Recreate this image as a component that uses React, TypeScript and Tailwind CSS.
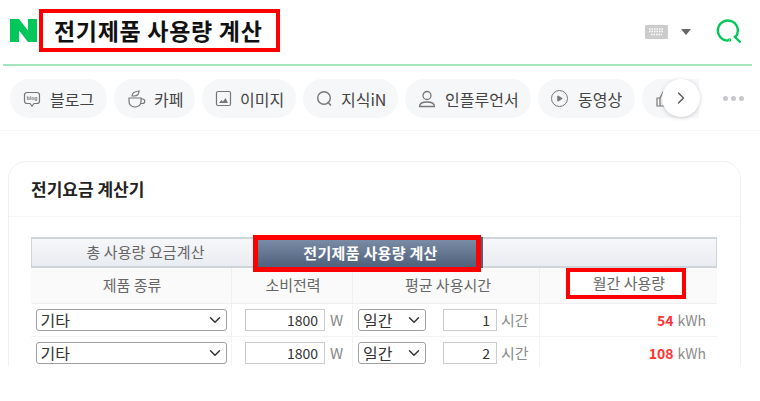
import { ChevronDown, ChevronRight, Play } from "lucide-react";
import React from "react";

const font = "font-['Noto_Sans_CJK_KR','Liberation_Sans',sans-serif]";

const BlogIcon = () => (
  <svg width="18" height="18" viewBox="0 0 18 18" fill="none" stroke="#777" strokeWidth="1.2">
    <path d="M4 2.500h10a2.500 2.500 0 0 1 2.500 2.500v6a2.500 2.500 0 0 1-2.500 2.500h-3L9 16l-2-2.500H4A2.500 2.500 0 0 1 1.500 11V5A2.500 2.500 0 0 1 4 2.500z" />
    <text x="9" y="10" textAnchor="middle" fontSize="5" fontWeight="700" fill="#777" stroke="none" fontFamily="Liberation Sans">blog</text>
  </svg>
);

const CafeIcon = () => (
  <svg width="20" height="20" viewBox="0 0 20 20" fill="none" stroke="#777" strokeWidth="1.2">
    <path d="M2 9h12v3.500a5.500 5.500 0 0 1-5.500 5.500h-1A5.500 5.500 0 0 1 2 12.500z" />
    <path d="M14 10h1.500a2.200 2.200 0 0 1 0 4.500H13.500" />
    <path d="M5 7c0-3 3-4.500 7-5 0 3-2 5-5 5z" />
  </svg>
);

const ImageIcon = () => (
  <svg width="17" height="17" viewBox="0 0 17 17" fill="none" stroke="#777" strokeWidth="1.200">
    <rect x="1.500" y="1.500" width="14" height="14" rx="1.500" />
    <path d="M4 13l2.500-3 1.500 1.500L10.500 8 13 13z" fill="#777" stroke="none" />
  </svg>
);

const SearchOutline = () => (
  <svg width="17" height="17" viewBox="0 0 17 17" fill="none" stroke="#777" strokeWidth="1.400">
    <circle cx="8" cy="8" r="6.300" />
    <path d="M11.500 12l3.500 3.500" />
  </svg>
);

const PersonIcon = () => (
  <svg width="18" height="18" viewBox="0 0 18 18" fill="none" stroke="#777" strokeWidth="1.300">
    <circle cx="9" cy="5.500" r="4" />
    <path d="M1.500 16.500c0-3 2.500-4.500 7.500-4.500s7.500 1.500 7.500 4.500z" />
  </svg>
);

const ThumbIcon = () => (
  <svg width="18" height="18" viewBox="0 0 18 18" fill="none" stroke="#777" strokeWidth="1.200">
    <path d="M2 8h3v8H2zM5 8l3-6c1.500 0 2 1 2 2v3h5v9H5" />
  </svg>
);

const chips: { label: string; icon: React.ReactNode; width: string; gap: string }[] = [
  { label: "블로그", icon: <BlogIcon />, width: "w-[97px]", gap: "gap-[9px]" },
  { label: "카페", icon: <CafeIcon />, width: "w-[81px]", gap: "gap-[7px]" },
  { label: "이미지", icon: <ImageIcon />, width: "w-[94px]", gap: "gap-[8px]" },
  { label: "지식iN", icon: <SearchOutline />, width: "w-[95px]", gap: "gap-[8px]" },
  { label: "인플루언서", icon: <PersonIcon />, width: "w-[126px]", gap: "gap-[9px]" },
  {
    label: "동영상",
    icon: (
      <span className="flex h-[17px] w-[17px] items-center justify-center rounded-full border-[1.5px] border-[#777]">
        <Play size={7} fill="#777" color="#777" />
      </span>
    ),
    width: "w-[97px]",
    gap: "gap-[10px]",
  },
  // the next chip's label sits behind the scroll button
  { label: "", icon: <ThumbIcon />, width: "w-[90px]", gap: "gap-[9px]" },
];

const rows = [
  { hours: 1, usage: 54 },
  { hours: 2, usage: 108 },
];

const Select = ({ value, width }: { value: string; width: string }) => (
  <div className={`relative h-[22px] ${width}`}>
    <select className="h-full w-full appearance-none rounded-[3px] border border-[#a0a0a0] bg-white pl-[4px] text-[16px] leading-none text-[#333]">
      <option>{value}</option>
    </select>
    <ChevronDown size={18} strokeWidth={2} color="#333" className="pointer-events-none absolute right-[3px] top-[2px]" />
  </div>
);

const Row = ({ hours, usage }: { hours: number; usage: number }) => (
  <div className="grid h-[33px] grid-cols-[201px_121px_78px_109px_177px] border-b border-[#f3f3f3] text-[15px] text-[#333]">
    <div className="flex items-center justify-center border-r border-[#f3f3f3]">
      <Select value="기타" width="w-[191px]" />
    </div>
    <div className="flex items-center border-r border-[#f3f3f3] pl-[13px]">
      <input
        readOnly
        value="1800"
        className="h-[22px] w-[80px] border border-[#ccc] bg-white pr-[6px] text-right text-[14px] text-[#333]"
      />
      <span className="ml-[5px] text-[#8a8a8a]">W</span>
    </div>
    <div className="flex items-center justify-center">
      <Select value="일간" width="w-[68px]" />
    </div>
    <div className="flex items-center border-r border-[#f3f3f3] pl-[12px]">
      <input
        readOnly
        value={hours}
        className="h-[22px] w-[54px] border border-[#ccc] bg-white pr-[6px] text-right text-[14px] text-[#333]"
      />
      <span className="ml-[4px] text-[#8a8a8a]">시간</span>
    </div>
    <div className="flex items-center justify-end gap-[4px] pr-[11px] text-[14px]">
      <span className="font-bold text-[#ff3333]">{usage}</span>
      <span className="text-[#8a8a8a]">kWh</span>
    </div>
  </div>
);

export default function App() {
  return (
    <div className={`${font} h-[366px] w-[760px] overflow-hidden bg-white`}>
      {/* Header */}
      <header className="mx-[3px] flex h-[66px] w-[749px] items-start border-b-2 border-[#a3e6bf] pl-[7px]">
        <svg width="27" height="23" viewBox="0 0 27 23" className="mt-[19px]">
          <path d="M0 0h9l9 11.500V0h9v23h-9L9 11.500V23H0z" fill="#03c75a" />
        </svg>
        <div className="ml-[2px] mt-[9px] flex h-[43px] w-[241px] items-center border-4 border-[#ff0000] pl-[11px] text-[23px] font-bold tracking-[0.7px] whitespace-nowrap text-[#111]">
          전기제품 사용량 계산
        </div>
        <div className="ml-auto mr-[9px] mt-[18px] flex items-center">
          <svg width="23" height="14" viewBox="0 0 23 14">
            <rect width="23" height="14" rx="1" fill="#ccc" />
            <path d="M4 4h15M4 6.500h15M6 9.500h11" stroke="#fff" strokeWidth="1.300" strokeDasharray="1.500 1" />
          </svg>
          <span className="ml-[13px] h-0 w-0 border-x-[5px] border-t-[6px] border-x-transparent border-t-[#666]" />
          <svg width="27" height="27" viewBox="0 0 27 27" fill="none" className="ml-[25px]" stroke="#03c75a" strokeWidth="2.400">
            <path d="M12 22.500A10 10 0 1 1 19 19.500" />
            <path d="M18 18l6.500 6.500" />
            <circle cx="13.500" cy="22" r="0.600" />
          </svg>
        </div>
      </header>

      {/* Category chips */}
      <nav className="relative h-[65px] w-[760px] border-b border-[#f5f5f5] pt-[13px]">
        <div className="flex w-[699px] gap-[7px] overflow-hidden pl-[10px]">
          {chips.map((chip, index) => (
            <div
              key={index}
              className={`flex h-[39px] shrink-0 items-center rounded-full bg-[#f6f7f8] pl-[13px] text-[16px] whitespace-nowrap text-[#444] ${chip.gap} ${chip.width}`}
            >
              {chip.icon}
              {chip.label}
            </div>
          ))}
        </div>
        <div className="absolute left-[662px] top-[13px] flex h-[38px] w-[38px] items-center justify-center rounded-full bg-white shadow-[0_1px_4px_rgba(0,0,0,0.18)]">
          <ChevronRight size={20} strokeWidth={1.6} color="#555" />
        </div>
        <div className="absolute left-[723px] top-[30px] flex gap-[3px]">
          <span className="h-[5px] w-[5px] rounded-full bg-[#c6c8cc]" />
          <span className="h-[5px] w-[5px] rounded-full bg-[#c6c8cc]" />
          <span className="h-[5px] w-[5px] rounded-full bg-[#c6c8cc]" />
        </div>
      </nav>

      {/* Calculator card */}
      <section className="ml-[8px] mt-[30px] h-[260px] w-[733px] rounded-t-[18px] border border-[#f0f0f2]">
        <div className="flex h-[55px] items-center border-b border-[#f6f6f6] pl-[22px] text-[17px] font-bold text-[#222]">
          전기요금 계산기
        </div>
        <div className="ml-[22px] mt-[20px] w-[686px]">
          <div className="flex h-[31px] border-y-2 border-x border-[#cfd4d9] bg-gradient-to-b from-[#f6f7f9] to-[#e9ecf1] text-[15px]">
            <div className="flex w-[221px] items-center justify-center pl-[6px] tracking-[0.1px] text-[#666]">총 사용량 요금계산</div>
            <div className="z-10 -my-[4px] flex h-[37px] w-[228px] items-center justify-center border-[5px] border-[#ff0000] bg-gradient-to-b from-[#7a8ba5] to-[#50617c] pl-[7px] font-bold tracking-[0.3px] text-white">
              전기제품 사용량 계산
            </div>
            <div className="my-[-2px] w-[2px] bg-[#50617c]" />
          </div>
          <div className="grid h-[36px] grid-cols-[201px_121px_187px_177px] border-b border-[#f0f0f0] bg-[#fafafa] text-[15px] text-[#666]">
            <div className="flex items-center justify-center border-r border-[#f0f0f0] pl-[2px]">제품 종류</div>
            <div className="flex items-center justify-center border-r border-[#f0f0f0] pl-[2px]">소비전력</div>
            <div className="flex items-center justify-center border-r border-[#f0f0f0] pl-[4px]">평균 사용시간</div>
            <div className="flex items-start pl-[26px]">
              <div className="flex h-[31px] w-[120px] items-center justify-center border-[4px] border-[#ff0000] bg-white pl-[6px]">
                월간 사용량
              </div>
            </div>
          </div>
          {rows.map((row) => (
            <Row key={row.hours} hours={row.hours} usage={row.usage} />
          ))}
        </div>
      </section>
    </div>
  );
}
